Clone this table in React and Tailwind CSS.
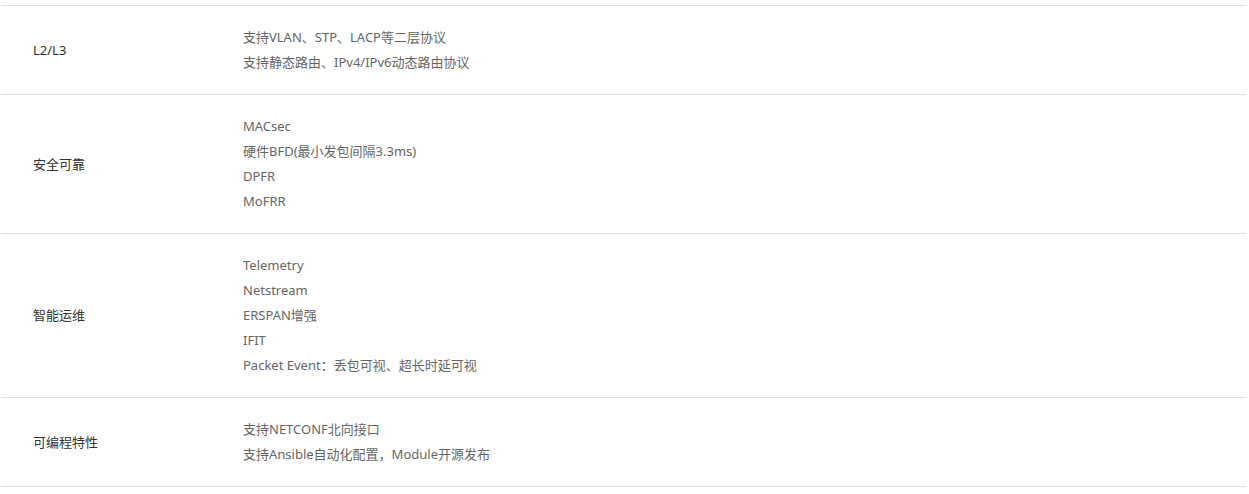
import React from "react";

const rows = [
  {
    name: "L2/L3",
    items: ["支持VLAN、STP、LACP等二层协议", "支持静态路由、IPv4/IPv6动态路由协议"],
  },
  {
    name: "安全可靠",
    items: ["MACsec", "硬件BFD(最小发包间隔3.3ms)", "DPFR", "MoFRR"],
  },
  {
    name: "智能运维",
    items: [
      "Telemetry",
      "Netstream",
      "ERSPAN增强",
      "IFIT",
      "Packet Event：丢包可视、超长时延可视",
    ],
  },
  {
    name: "可编程特性",
    items: ["支持NETCONF北向接口", "支持Ansible自动化配置，Module开源发布"],
  },
];

export default function App() {
  return (
    <div className="bg-white w-full h-[494px] pt-[5px] pl-px font-['Noto_Sans','Noto_Sans_CJK_SC',sans-serif] text-[13px]">
      <div className="w-[1245px] border-t border-[#dddddd]">
        {rows.map((row) => (
          <div key={row.name} className="flex items-center border-b border-[#dddddd] py-[19px]">
            <div className="w-[242px] shrink-0 pl-8 text-[#333333] leading-[25px]">{row.name}</div>
            <div className="flex flex-col text-[#666666] leading-[25px]">
              {row.items.map((item) => (
                <span key={item}>{item}</span>
              ))}
            </div>
          </div>
        ))}
      </div>
    </div>
  );
}
